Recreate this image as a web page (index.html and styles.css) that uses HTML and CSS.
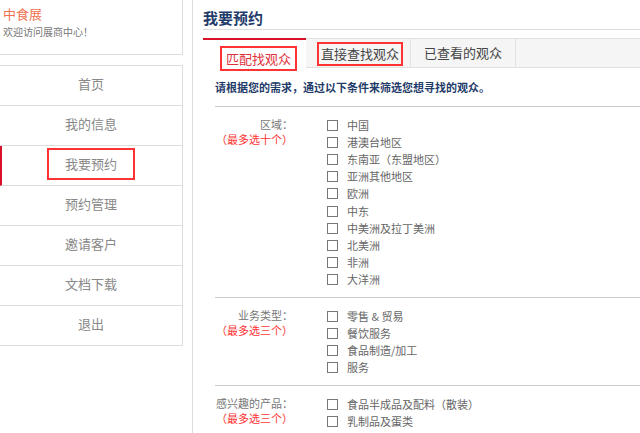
FILE: index.html
```html
<!DOCTYPE html>
<html lang="zh-CN">
<head>
    <meta charset="UTF-8">
    <title>我要预约</title>
    <link rel="stylesheet" href="styles.css">
</head>
<body>
    <div class="page">
        <aside class="sidebar">
            <div class="profile">
                <div class="brand">中食展</div>
                <div class="welcome">欢迎访问展商中心！</div>
            </div>
            <ul class="menu">
                <li>首页</li>
                <li>我的信息</li>
                <li class="active"><span class="mark">我要预约</span></li>
                <li>预约管理</li>
                <li>邀请客户</li>
                <li>文档下载</li>
                <li>退出</li>
            </ul>
        </aside>

        <main class="content">
            <h2 class="title">我要预约</h2>
            <div class="tabs">
                <div class="tab current"><span class="mark mark-a">匹配找观众</span></div>
                <div class="tab"><span class="mark mark-b">直接查找观众</span></div>
                <div class="tab">已查看的观众</div>
                <div class="tab-rest"></div>
            </div>
            <p class="hint">请根据您的需求，通过以下条件来筛选您想寻找的观众。</p>

            <div class="group">
                <div class="label">区域：<span class="limit">（最多选十个）</span></div>
                <ul class="options">
                    <li><i class="box"></i>中国</li>
                    <li><i class="box"></i>港澳台地区</li>
                    <li><i class="box"></i>东南亚（东盟地区）</li>
                    <li><i class="box"></i>亚洲其他地区</li>
                    <li><i class="box"></i>欧洲</li>
                    <li><i class="box"></i>中东</li>
                    <li><i class="box"></i>中美洲及拉丁美洲</li>
                    <li><i class="box"></i>北美洲</li>
                    <li><i class="box"></i>非洲</li>
                    <li><i class="box"></i>大洋洲</li>
                </ul>
            </div>

            <div class="group">
                <div class="label">业务类型：<span class="limit">（最多选三个）</span></div>
                <ul class="options">
                    <li><i class="box"></i>零售 &amp; 贸易</li>
                    <li><i class="box"></i>餐饮服务</li>
                    <li><i class="box"></i>食品制造/加工</li>
                    <li><i class="box"></i>服务</li>
                </ul>
            </div>

            <div class="group">
                <div class="label">感兴趣的产品：<span class="limit">（最多选三个）</span></div>
                <ul class="options">
                    <li><i class="box"></i>食品半成品及配料（散装）</li>
                    <li><i class="box"></i>乳制品及蛋类</li>
                </ul>
            </div>
        </main>
    </div>
</body>
</html>
```

FILE: styles.css
```css
body {
    margin: 0;
    padding: 0;
    background-color: #fff;
    font-family: 'Noto Sans CJK SC', 'Liberation Sans', sans-serif;
    font-size: 12px;
    color: #666;
    overflow: hidden;
}

ul {
    list-style: none;
    margin: 0;
    padding: 0;
}

.page {
    display: flex;
    height: 433px;
    overflow: hidden;
}

/* 左侧栏 */
.sidebar {
    width: 183px;
    flex-shrink: 0;
    margin-right: 9px;
}

.profile {
    height: 54px;
    border: 1px solid #ddd;
    border-top: none;
    border-left: none;
    padding-left: 3px;
    box-sizing: content-box;
}

.brand {
    color: #f2704f;
    font-size: 13px;
    line-height: 18px;
    padding-top: 5px;
}

.welcome {
    font-size: 10px;
    color: #777;
    line-height: 14px;
    margin-top: 2px;
}

.menu {
    margin-top: 10px;
    border-top: 1px solid #ddd;
    border-right: 1px solid #ddd;
}

.menu li {
    height: 39px;
    line-height: 36px;
    border-bottom: 1px solid #ddd;
    text-align: center;
    font-size: 13px;
    color: #888;
}

.menu li.active {
    border-left: 2px solid #d8102a;
    padding-right: 2px;
}

.menu .mark {
    display: inline-block;
    border: 2px solid #f33;
    line-height: 28px;
    padding: 0 16px;
    margin-top: 2px;
    vertical-align: top;
}

/* 主内容 */
.content {
    flex: 1;
    border-left: 1px solid #ddd;
    padding-left: 10px;
}

.title {
    margin: 0;
    font-size: 15px;
    font-weight: bold;
    color: #1f3b6a;
    line-height: 20px;
    padding-top: 8px;
    padding-bottom: 1px;
    border-bottom: 1px solid #ddd;
}

.tabs {
    display: flex;
    margin-top: 8px;
    height: 29px;
    border-bottom: 1px solid #e2e2e2;
}

.tab {
    width: 104px;
    text-align: center;
    line-height: 28px;
    font-size: 13px;
    color: #444;
    background-color: #f5f5f5;
    border-right: 1px solid #e2e2e2;
    border-top: 1px solid #e2e2e2;
}

.tab.current {
    width: 103px;
    background-color: #fff;
    border-top: 2px solid #d8102a;
    border-right: none;
    color: #e0303a;
    height: 29px;
}

.tab-rest {
    flex: 1;
    background-color: #f5f5f5;
    border-top: 1px solid #e2e2e2;
}

.tabs .mark {
    display: inline-block;
    border: 2px solid #f33;
    position: relative;
}

.mark-a {
    line-height: 21px;
    padding: 0 4px;
    top: 5px;
    left: 4px;
}

.mark-b {
    line-height: 20px;
    padding: 0 2px;
    top: 1px;
    left: 2px;
}

.hint {
    margin: 0;
    padding: 11px 0 0 12px;
    height: 27px;
    font-size: 11px;
    font-weight: bold;
    color: #1f3b6a;
    line-height: 16px;
}

.group {
    display: flex;
    margin-left: 12px;
    border-top: 1px solid #ccc;
    padding: 10px 0 9px;
}

.label {
    width: 78px;
    text-align: right;
    font-size: 11px;
    line-height: 15px;
    color: #777;
    white-space: nowrap;
}

.limit {
    display: block;
    color: #f33;
}

.options {
    margin-left: 34px;
}

.options li {
    height: 17.1px;
    line-height: 17px;
    font-size: 11px;
    color: #666;
    display: flex;
    align-items: center;
}

.box {
    width: 9px;
    height: 9px;
    border: 1px solid #777;
    margin-right: 9px;
    background-color: #fff;
}
```
